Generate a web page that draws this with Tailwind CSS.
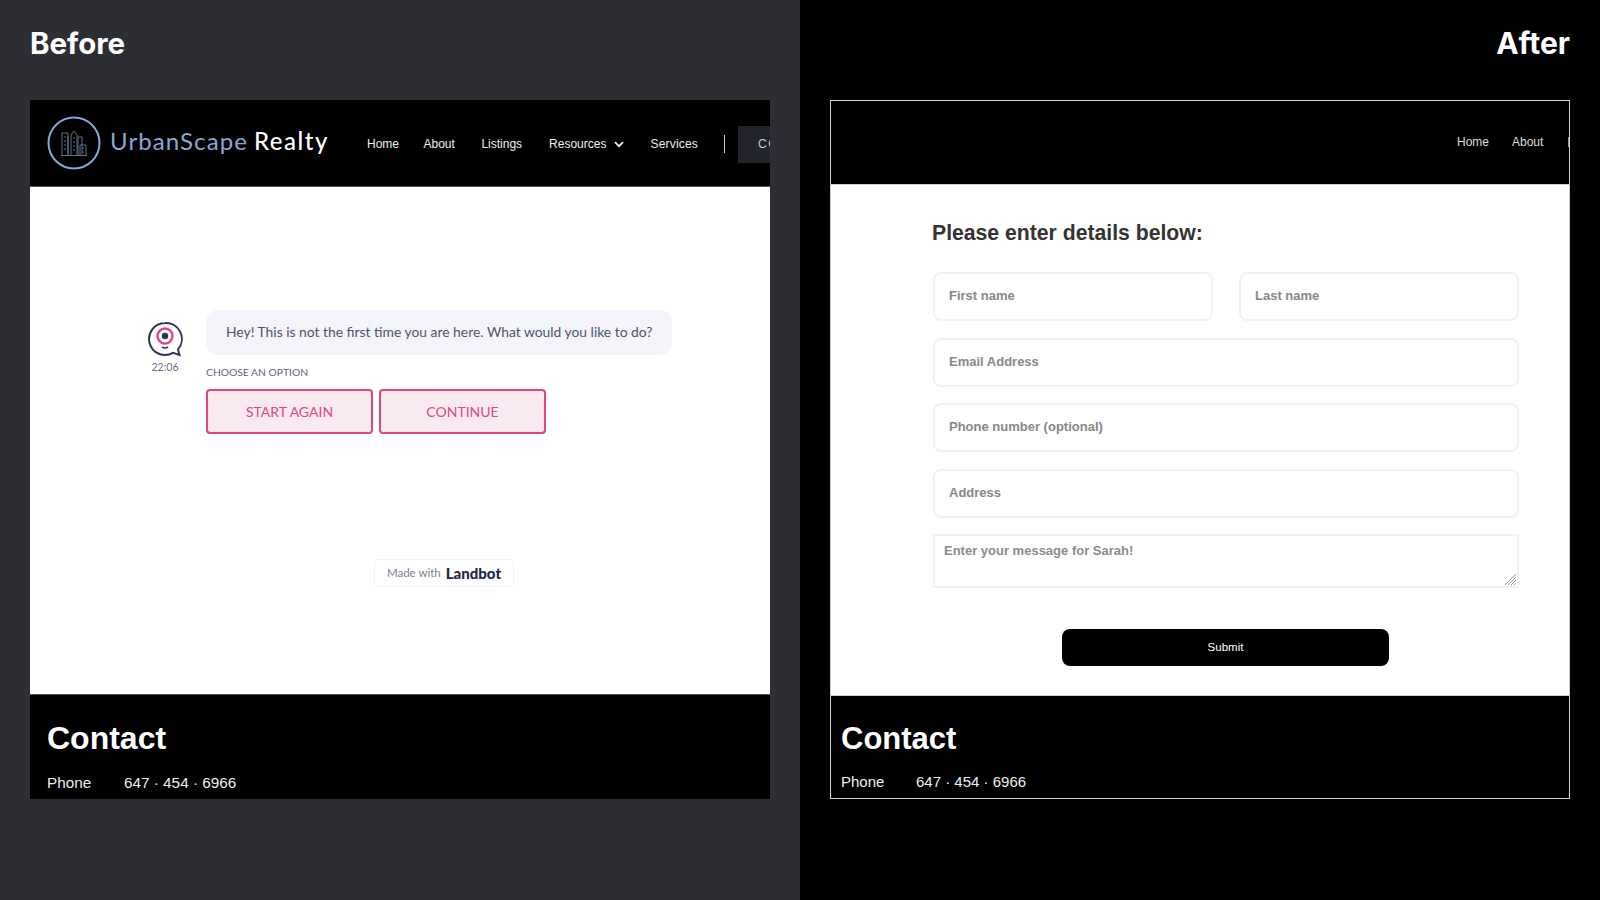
<!DOCTYPE html>
<html lang="en">
<head>
  <meta charset="UTF-8" />
  <title>Before / After</title>
  <script src="https://cdn.jsdelivr.net/npm/@tailwindcss/browser@4"></script>
</head>
<body class="bg-black w-[1600px] h-[900px] overflow-hidden font-['Liberation_Sans',sans-serif]">
  <div class="flex h-[900px]">

    <!-- Before -->
    <section class="w-[800px] h-full bg-[#2d2e33] px-[30px]">
      <h1 class="h-[100px] pt-[25px] text-[29.5px] leading-[36px] font-bold text-white font-['Inter',sans-serif]">Before</h1>
      <div class="w-[740px] h-[699px] flex flex-col overflow-hidden">
        <header class="h-[87px] shrink-0 bg-black flex items-center pl-[17px] border-b border-[#555]">
          <svg class="w-[54px] h-[54px] shrink-0" viewBox="0 0 54 54" fill="none">
            <circle cx="27" cy="27" r="25.500" stroke="#86a9d6" stroke-width="2" />
            <g stroke="#5f7288" stroke-width="1">
              <path d="M15 39V17h6v22M21 39V20M24 39V19l3-4 3 4v20M31 39V21h4v18M33 39V29h6v10M14 39.500h26" />
              <path d="M17 21h2M17 25h2M17 29h2M17 33h2M26 22h2M26 26h2M26 30h2M26 34h2M35 32h2M35 36h2" />
            </g>
          </svg>
          <div class="ml-[9px] mb-[4px] w-[219px] shrink-0 text-[24px] leading-[30px] whitespace-nowrap font-['Lato',sans-serif]"><span class="text-[#86a9d6] tracking-[1.1px]">UrbanScape</span><span class="text-white font-medium tracking-[1.5px] ml-[6px]">Realty</span></div>
          <nav class="ml-[38px] mt-[2px] flex items-center text-[12px] text-[#eeeeee] whitespace-nowrap">
            <span>Home</span>
            <span class="ml-[24.5px]">About</span>
            <span class="ml-[26.5px]">Listings</span>
            <span class="ml-[27px]">Resources</span>
            <svg class="ml-[8px] w-[10px] h-[7px]" viewBox="0 0 10 7" fill="none"><path d="M1 1.200l4 4 4-4" stroke="#eeeeee" stroke-width="1.800" /></svg>
            <span class="ml-[26px] tracking-[0.2px]">Services</span>
            <span class="ml-[26px] w-px h-[18px] bg-[#cccccc]"></span>
            <span class="ml-[13px] h-[37px] w-[60px] bg-[#22242b] flex items-center pl-[20px] tracking-[1.5px] text-[#cccccc] shrink-0">CONTACT</span>
          </nav>
        </header>

        <main class="h-[507px] shrink-0 bg-white flex flex-col font-['Lato',sans-serif]">
          <div class="mt-[123px] ml-[118px] flex items-start">
            <div class="w-[34px] mt-[11px] flex flex-col items-center">
              <svg class="w-[36px] h-[36px] shrink-0" viewBox="0 0 36 36" fill="none">
                <path d="M18 2a16 16 0 1 0 8 29.900l6.500 2-1.500-5.500A16 16 0 0 0 18 2z" stroke="#2c3553" stroke-width="2" />
                <circle cx="18" cy="15" r="7.500" stroke="#e8457f" stroke-width="2.400" />
                <circle cx="18" cy="15" r="3.200" fill="#2c3553" />
                <path d="M15 26q3 2 6 0" stroke="#2c3553" stroke-width="1.600" />
              </svg>
              <span class="mt-[3px] text-[10.5px] leading-[14px] text-[#6b7088]">22:06</span>
            </div>
            <div class="ml-[24px]">
              <div class="w-[466px] h-[45px] rounded-[12px] bg-[#f4f5fa] pl-[20px] flex items-center text-[13.87px] text-[#4e5370] whitespace-nowrap">Hey! This is not the first time you are here. What would you like to do?</div>
              <p class="mt-[10px] text-[10.3px] leading-[14px] text-[#5e6482]">CHOOSE AN OPTION</p>
              <div class="mt-[10px] flex gap-[6px]">
                <button class="w-[167px] h-[45px] rounded-[4px] border-2 border-[#d9487f] bg-[#f9e9f0] text-[14px] text-[#dc4a85]">START AGAIN</button>
                <button class="w-[167px] h-[45px] rounded-[4px] border-2 border-[#d9487f] bg-[#f9e9f0] text-[14px] text-[#dc4a85]">CONTINUE</button>
              </div>
            </div>
          </div>
          <div class="mt-[125px] ml-[344px] w-[140px] h-[28px] rounded-[3px] border border-[#f1f2f5] flex items-center justify-center gap-[5px]">
            <span class="text-[11.5px] text-[#7d8196]">Made with</span>
            <span class="text-[15px] font-black text-[#22264a]">Landbot</span>
          </div>
        </main>

        <footer class="flex-1 bg-black border-t border-[#555] pl-[17px] pt-[25px] text-white">
          <h2 class="text-[32px] leading-[37px] font-bold">Contact</h2>
          <p class="mt-[17px] flex text-[15.3px] leading-[18px] text-[#eeeeee]">
            <span class="w-[77px]">Phone</span><span>647 · 454 · 6966</span>
          </p>
        </footer>
      </div>
    </section>

    <!-- After -->
    <section class="w-[800px] h-full bg-black pl-[30px]">
      <h1 class="h-[100px] pt-[25px] pr-[30px] text-right text-[30px] leading-[36px] font-bold text-white font-['Inter',sans-serif]">After</h1>
      <div class="w-[740px] h-[699px] border border-[#d0d0d0] flex flex-col overflow-hidden">
        <header class="h-[84px] shrink-0 bg-black border-b border-[#cccccc] flex items-center pl-[626px] pb-[2px] text-[12px] text-[#dddddd] whitespace-nowrap">
          <span>Home</span>
          <span class="ml-[23px]">About</span>
          <span class="ml-[25px] w-[2px] h-[10px] bg-[#999999] shrink-0"></span>
        </header>

        <main class="h-[510px] shrink-0 bg-white pl-[101px] pt-[34px]">
          <h2 class="text-[21.2px] leading-[28px] font-bold text-[#333333]">Please enter details below:</h2>
          <div class="mt-[25px] ml-[1px] w-[586px] flex flex-col gap-[16.5px] text-[13px] font-bold text-[#888888]">
            <div class="flex gap-[26px]">
              <div class="w-[280px] h-[49px] rounded-[8px] border-2 border-[#f2f2f2] pl-[14px] pb-[1px] flex items-center">First name</div>
              <div class="w-[280px] h-[49px] rounded-[8px] border-2 border-[#f2f2f2] pl-[14px] pb-[1px] flex items-center">Last name</div>
            </div>
            <div class="h-[49px] rounded-[8px] border-2 border-[#f2f2f2] pl-[14px] pb-[1px] flex items-center">Email Address</div>
            <div class="h-[49px] rounded-[8px] border-2 border-[#f2f2f2] pl-[14px] pb-[1px] flex items-center">Phone number (optional)</div>
            <div class="h-[49px] rounded-[8px] border-2 border-[#f2f2f2] pl-[14px] pb-[1px] flex items-center">Address</div>
            <div class="relative h-[54px] border-2 border-[#f2f2f2] pl-[9px] pt-[6px] leading-[18px] text-[#8c8c8c]">
              Enter your message for Sarah!
              <svg class="absolute right-0 bottom-0 w-[13px] h-[13px]" viewBox="0 0 13 13" fill="none" stroke="#999999"><path d="M1 12L12 1M4 12l8-8M7 12l5-5M10 12l2-2" /></svg>
            </div>
          </div>
          <button class="block mt-[41px] ml-[130px] w-[327px] h-[37px] rounded-[8px] bg-black text-white text-[11.5px]">Submit</button>
        </main>

        <footer class="flex-1 bg-black border-t border-[#cccccc] pl-[10px] pt-[24px] text-white">
          <h2 class="text-[31px] leading-[37px] font-bold">Contact</h2>
          <p class="mt-[16px] flex text-[15px] leading-[18px] text-[#eeeeee]">
            <span class="w-[75px]">Phone</span><span>647 · 454 · 6966</span>
          </p>
        </footer>
      </div>
    </section>
  </div>
</body>
</html>
